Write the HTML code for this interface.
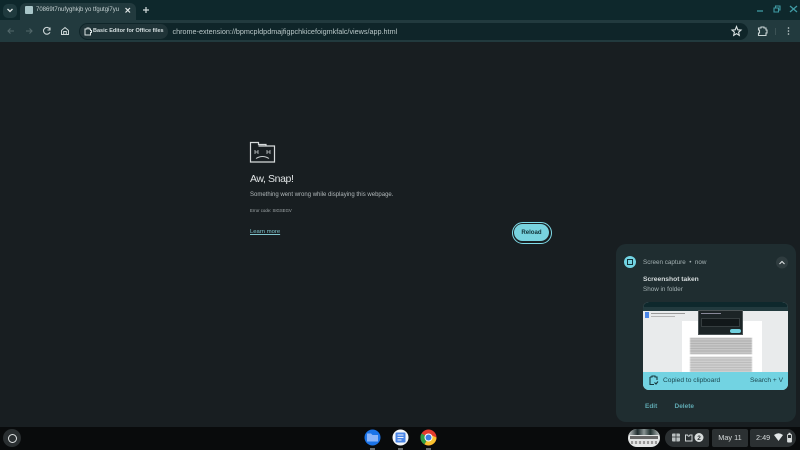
<!DOCTYPE html>
<html><head><meta charset="utf-8"><style>
html,body{margin:0;padding:0;width:800px;height:450px;overflow:hidden;background:#181e21}
body{position:relative;font-family:"Liberation Sans",sans-serif}
#r{position:absolute;left:0;top:0;width:800px;height:450px;filter:blur(.35px)}
.a{position:absolute;white-space:nowrap}
svg{position:absolute;overflow:visible}
</style></head><body><div id="r">
<!-- title bar -->
<div class="a" style="left:0;top:0;width:800px;height:20px;background:#0e282c"></div>
<div class="a" style="left:3px;top:4px;width:14px;height:14px;border-radius:5px;background:#1f3a3e"></div>
<svg style="left:0;top:0" width="30" height="20"><path d="M7.5 9 L10 11.5 L12.5 9" fill="none" stroke="#dfe6e6" stroke-width="1.3"/></svg>
<div class="a" style="left:20px;top:3px;width:116px;height:18px;background:#223a3e;border-radius:6px 6px 0 0"></div>
<div class="a" style="left:25px;top:6px;width:8px;height:8px;border-radius:1px;background:#a9c6c9"></div>
<div class="a" style="left:36px;top:5px;width:84px;overflow:hidden;font-size:6px;line-height:10px;color:#c6d2d3">70869t7nufyghkjb yo tfgutgi7yu</div>
<svg style="left:0;top:0" width="160" height="20"><path d="M125.500 8 L130 12.500 M130 8 L125.500 12.500" stroke="#e2e8e8" stroke-width="1.200"/><path d="M146 7 V13 M143 10 H149" stroke="#d3dcdc" stroke-width="1.200"/></svg>
<svg style="left:640px;top:0" width="160" height="20"><path d="M117 11 H123" stroke="#3f9aa3" stroke-width="1.300"/><path d="M134 8 H138.500 V12 H134 Z M135.500 8 V6 H140 V10 H138.500" fill="none" stroke="#3f9aa3" stroke-width="1.100"/><path d="M150 6 L157 12 M157 6 L150 12" stroke="#3f9aa3" stroke-width="1.300"/></svg>
<!-- toolbar -->
<div class="a" style="left:0;top:20px;width:800px;height:22px;background:#223a3e"></div>
<div class="a" style="left:79px;top:23px;width:669px;height:17px;border-radius:9px;background:#0f2529"></div>
<div class="a" style="left:80px;top:24px;width:88px;height:15px;border-radius:8px;background:#203438"></div>
<svg style="left:0;top:20px" width="80" height="22"><path d="M14 11 H8 M10.500 8.500 L8 11 L10.500 13.500" fill="none" stroke="#53686b" stroke-width="1.100"/><path d="M26 11 H32 M29.500 8.500 L32 11 L29.500 13.500" fill="none" stroke="#53686b" stroke-width="1.100"/><path d="M49.800 9 A3.400 3.400 0 1 0 50 12.200 M50 7.500 V10 H47.500" fill="none" stroke="#cdd7d8" stroke-width="1.100"/><path d="M61.500 10.500 L65 7.500 L68.500 10.500 V14.500 H61.500 Z M63.700 14.500 V11.500 H66.300 V14.500" fill="none" stroke="#cdd7d8" stroke-width="1"/></svg>
<svg style="left:0;top:0" width="100" height="42"><path d="M85 29 H87 V28 H89 V29 H90.500 V30.500 H91.500 V32.500 H90.500 V35 H85 Z" fill="none" stroke="#dbe3e3" stroke-width="1"/></svg>
<div class="a" style="left:93px;top:26px;font-size:5.500px;line-height:11px;font-weight:bold;color:#d5dfe0">Basic Editor for Office files</div>
<div class="a" style="left:172.500px;top:25.500px;font-size:7.220px;line-height:12px;color:#b9c7c8">chrome-extension://bpmcpldpdmajfigpchkicefoigmkfalc/views/app.html</div>
<svg style="left:640px;top:20px" width="160" height="22"><path d="M96.500 6.500 L97.800 9.800 L101 10.100 L98.600 12.200 L99.300 15.400 L96.500 13.700 L93.700 15.400 L94.400 12.200 L92 10.100 L95.200 9.800 Z" fill="none" stroke="#dbe3e3" stroke-width="1.100"/><path d="M118.500 8 H121 V7 H124 V8 H126 V10 H127 V13 H126 V15.500 H118.500 V13 H119.500 V10 H118.500 Z" fill="none" stroke="#c9d4d5" stroke-width="1.100"/><path d="M135.500 8 V15" stroke="#44595c" stroke-width=".8"/><circle cx="148.500" cy="8" r=".8" fill="#c9d4d5"/><circle cx="148.500" cy="11" r=".8" fill="#c9d4d5"/><circle cx="148.500" cy="14" r=".8" fill="#c9d4d5"/></svg>
<!-- error page -->
<svg style="left:0;top:0" width="800" height="450"><path d="M250.500 162 V142.500 H258.500 V144.500 H266 V146 H274.500 V162 Z M258.500 146 H266" fill="none" stroke="#d6dadb" stroke-width="1.200"/><path d="M255 150 V154 M258 150 V154 M255 152 H258 M267 150 V154 M270 150 V154 M267 152 H270" stroke="#c6cbcc" stroke-width=".8"/><path d="M256 158.500 Q262.500 154.500 269 158.500" fill="none" stroke="#c6cbcc" stroke-width="1"/></svg>
<div class="a" style="left:250px;top:172px;font-size:10.500px;line-height:14px;letter-spacing:-.4px;color:#dfe3e4">Aw, Snap!</div>
<div class="a" style="left:250px;top:189.500px;font-size:6px;line-height:10px;color:#b0b7b9">Something went wrong while displaying this webpage.</div>
<div class="a" style="left:250px;top:206.500px;font-size:4.300px;line-height:7px;color:#a4abad">Error code: SIGSEGV</div>
<div class="a" style="left:250px;top:228px;font-size:5.900px;line-height:9px;color:#7fc4cc;text-decoration:underline">Learn more</div>
<div class="a" style="left:511.500px;top:221.500px;width:40px;height:22px;box-sizing:border-box;border:1.200px solid #7fdbe8;border-radius:11px;background:#181e21"></div>
<div class="a" style="left:514px;top:224px;width:35px;height:17px;border-radius:9px;background:#78d3df;font-size:6.100px;line-height:17px;font-weight:bold;text-align:center;color:#123238">Reload</div>
<!-- notification -->
<div class="a" style="left:616px;top:244px;width:180px;height:178px;border-radius:10px;background:#1f2d30"></div>
<div class="a" style="left:624px;top:256px;width:12px;height:12px;border-radius:6px;background:#72d3e2"></div>
<svg style="left:0;top:0" width="800" height="450"><path d="M627.500 259.500 H632.500 V264.500 H627.500 Z" fill="none" stroke="#123238" stroke-width="1"/><circle cx="782" cy="262.500" r="6" fill="#2f3c3f"/><path d="M779.500 264 L782 261.500 L784.500 264" fill="none" stroke="#e3e8e9" stroke-width="1"/></svg>
<div class="a" style="left:643px;top:257.500px;font-size:6.300px;line-height:10px;color:#a3b0b2">Screen capture &nbsp;•&nbsp; now</div>
<div class="a" style="left:643px;top:273.500px;font-size:6.700px;line-height:11px;font-weight:bold;color:#d5dbdc">Screenshot taken</div>
<div class="a" style="left:643px;top:284.500px;font-size:6.300px;line-height:10px;color:#a3b0b2">Show in folder</div>
<!-- thumbnail -->
<div class="a" style="left:643px;top:302px;width:145px;height:88px;border-radius:6px;overflow:hidden;background:#e9ebec">
 <div class="a" style="left:0;top:0;width:145px;height:5px;background:#0e282c"></div>
 <div class="a" style="left:0;top:5px;width:145px;height:4px;background:#223a3e"></div>
 <div class="a" style="left:2px;top:10px;width:4px;height:6px;background:#4a86e8"></div>
 <div class="a" style="left:8px;top:11px;width:34px;height:1px;background:#9a9a9a"></div>
 <div class="a" style="left:8px;top:14px;width:24px;height:1px;background:#b5b5b5"></div>
 <div class="a" style="left:39px;top:19px;width:80px;height:53px;background:#fff"></div>
 <div class="a" style="left:47px;top:36px;width:62px;height:16px;filter:blur(.4px);background:repeating-linear-gradient(#9c9c9c 0 1px,#d4d4d4 1px 2.500px)"></div>
 <div class="a" style="left:47px;top:55px;width:62px;height:16px;filter:blur(.4px);background:repeating-linear-gradient(#a6a6a6 0 1px,#dcdcdc 1px 2.500px)"></div>
 <div class="a" style="left:55px;top:8px;width:45px;height:25px;background:#1c2426;border:1px solid #4c5456;box-sizing:border-box"></div>
 <div class="a" style="left:58px;top:11px;width:20px;height:1px;background:#889"></div>
 <div class="a" style="left:58px;top:16px;width:39px;height:9px;background:#12181a;border:1px solid #353d3f;box-sizing:border-box"></div>
 <div class="a" style="left:87px;top:27px;width:11px;height:4px;border-radius:2px;background:#70d0de"></div>
 <div class="a" style="left:0;top:70px;width:145px;height:18px;background:#72d3e2"></div>
</div>
<svg style="left:0;top:0" width="800" height="450"><path d="M650 377 H652 V376 H655 V377 H657 V380 M650 377 V384.500 H654 M654.500 382.500 L656 384 L658 381.500" fill="none" stroke="#16383e" stroke-width="1.100"/></svg>
<div class="a" style="left:663px;top:376px;font-size:6.650px;line-height:10px;color:#1c4a52">Copied to clipboard</div>
<div class="a" style="left:750px;top:376px;font-size:6.650px;line-height:10px;color:#1c4a52">Search + V</div>
<div class="a" style="left:645px;top:401.500px;font-size:6.500px;line-height:10px;font-weight:bold;color:#5fa9b2">Edit</div>
<div class="a" style="left:674.500px;top:401.500px;font-size:6.500px;line-height:10px;font-weight:bold;color:#5fa9b2">Delete</div>
<!-- shelf -->
<div class="a" style="left:0;top:427px;width:800px;height:23px;background:#090b0c"></div>
<div class="a" style="left:3px;top:429px;width:18px;height:18px;border-radius:9px;background:#2a2f31"></div>
<div class="a" style="left:7.500px;top:433.500px;width:9px;height:9px;box-sizing:border-box;border:1.200px solid #dfe3e4;border-radius:50%"></div>
<svg style="left:0;top:0" width="800" height="450">
<circle cx="372.500" cy="437.500" r="8" fill="#1a73e8"/><path d="M367 433.500 H371 L372.500 435 H378 V441.500 H367 Z" fill="#8ab4f8"/>
<circle cx="400.500" cy="437.500" r="8" fill="#f4f6f8"/><rect x="395.500" y="432.500" width="10" height="10" rx="1" fill="#4a86e8"/><path d="M397.500 435 H403.500 M397.500 437.500 H403.500 M397.500 440 H401.500" stroke="#e8f0fe" stroke-width=".9"/>
<circle cx="428.500" cy="437.500" r="8" fill="#e33b2e"/><path d="M428.500 437.500 L421.500 433.500 A8 8 0 0 0 424.500 444.400 Z" fill="#2f9e44"/><path d="M428.500 437.500 L424.500 444.400 A8 8 0 0 0 436.500 437.500 L432 435.500 Z" fill="#f9c22e"/><circle cx="428.500" cy="437.500" r="4" fill="#fff"/><circle cx="428.500" cy="437.500" r="3" fill="#3b7de0"/>
<path d="M370 449 H375 M398 449 H403 M426 449 H431" stroke="#c8ccce" stroke-width="1"/>
</svg>
<div class="a" style="left:628px;top:429px;width:32px;height:18px;border-radius:9px;overflow:hidden;background:#e4e6e6">
 <div class="a" style="left:0;top:0;width:32px;height:6px;background:linear-gradient(90deg,#cfd3d3,#1d2a2c 30%,#8a9494 50%,#20302f 70%,#bfc5c5)"></div>
 <div class="a" style="left:2px;top:7px;width:28px;height:3px;background:#666"></div>
 <div class="a" style="left:3px;top:12px;width:26px;height:3px;background:repeating-linear-gradient(90deg,#999 0 2px,#ddd 2px 4px)"></div>
</div>
<div class="a" style="left:665px;top:429px;width:44px;height:18px;border-radius:9px 2px 2px 9px;background:#2b3032"></div>
<div class="a" style="left:712px;top:429px;width:36px;height:18px;border-radius:2px;background:#2b3032;font-size:7.300px;line-height:18px;text-align:center;color:#d6dadb">May 11</div>
<div class="a" style="left:750px;top:429px;width:46px;height:18px;border-radius:2px 9px 9px 2px;background:#2b3032"></div>
<div class="a" style="left:756px;top:429px;font-size:7.300px;line-height:18px;color:#d6dadb">2:49</div>
<svg style="left:0;top:0" width="800" height="450">
<rect x="672" y="433.500" width="8" height="8" rx="1" fill="#b9bfc0"/><path d="M676 433.500 V441.500 M672 437 H680" stroke="#2b3032" stroke-width=".8"/>
<path d="M685.500 435 V441 H692 V435 H690 Q688.700 437.500 687.500 435 Z" fill="none" stroke="#cfd4d5" stroke-width="1"/>
<circle cx="699" cy="437.500" r="4.500" fill="#d9dddd"/><text x="699" y="440" font-family="Liberation Sans" font-size="6.500" font-weight="bold" text-anchor="middle" fill="#2b3032">2</text>
<path d="M774 435 Q778.500 431.500 783 435 L778.500 441 Z" fill="#e3e7e8"/>
<rect x="787.500" y="434.500" width="4" height="7.500" rx=".8" fill="none" stroke="#d9dddd" stroke-width=".9"/><rect x="788.500" y="432.800" width="2" height="1.500" fill="#d9dddd"/><rect x="788" y="438" width="3" height="4" fill="#d9dddd"/>
</svg>
</div></body></html>
